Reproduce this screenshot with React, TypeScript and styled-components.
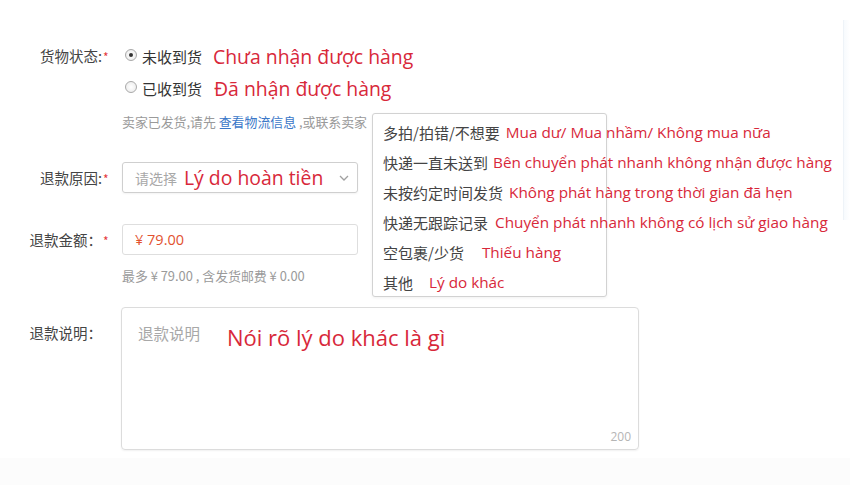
import React from "react";
import styled, { createGlobalStyle } from "styled-components";

const Global = createGlobalStyle`
  html, body { margin: 0; padding: 0; background: #fff; }
  body { font-family: "Noto Sans CJK SC", "Noto Sans", sans-serif; }
`;

const RED = "#d8283a";
const CJK = `"Noto Sans CJK SC", "Noto Sans", sans-serif`;
const VI = `"Open Sans", "Noto Sans", sans-serif`;

const Page = styled.div`
  width: 850px;
  height: 485px;
  display: flex;
  flex-direction: column;
  overflow: hidden;
  background: #fff;
`;

const Main = styled.div`
  flex: 1;
  display: flex;
`;

const Footer = styled.div`
  height: 27px;
  background: #fcfcfc;
`;

const Form = styled.div`
  flex: 1;
  padding-top: 40px;
  display: flex;
  flex-direction: column;
`;

const SideEdge = styled.div`
  width: 6px;
  margin-top: 20px;
  height: 200px;
  border-left: 1px solid #eef3f8;
  background: linear-gradient(to right, #f7fafd, #fff);
`;

const Row = styled.div<{ $mt?: number; $align?: string }>`
  display: grid;
  grid-template-columns: 111px 1fr;
  column-gap: 11px;
  align-items: ${(p) => p.$align || "center"};
  margin-top: ${(p) => p.$mt || 0}px;
`;

const Label = styled.div<{ $pt?: number }>`
  text-align: right;
  font-family: ${CJK};
  font-size: 14.5px;
  color: #444;
  padding-top: ${(p) => p.$pt || 0}px;
  white-space: nowrap;
  align-self: ${(p) => (p.$pt !== undefined ? "start" : "auto")};
`;

const Star = styled.span<{ $hidden?: boolean }>`
  color: ${(p) => (p.$hidden ? "transparent" : "#e4393c")};
  font-size: 12px;
  margin-left: 1px;
  display: inline-block;
  width: 8px;
  text-align: left;
`;

const StatusCol = styled.div`
  display: flex;
  flex-direction: column;
`;

const Option = styled.label`
  display: flex;
  align-items: center;
  height: 32px;
  padding-left: 3px;
`;

const RadioDot = styled.span<{ $checked?: boolean }>`
  width: 10px;
  height: 10px;
  border-radius: 50%;
  border: 1px solid #a9a9a9;
  background: radial-gradient(circle, #fff 0%, #e8e8e8 100%);
  display: inline-flex;
  align-items: center;
  justify-content: center;
  margin-right: 5px;
  margin-top: -2px;
  &::after {
    content: "";
    width: 4px;
    height: 4px;
    border-radius: 50%;
    background: ${(p) => (p.$checked ? "#333" : "transparent")};
  }
`;

const OptionText = styled.span`
  font-family: ${CJK};
  font-size: 15px;
  color: #333;
`;

const Note = styled.span<{ $size: number; $ml?: number }>`
  font-family: ${VI};
  font-size: ${(p) => p.$size}px;
  color: ${RED};
  margin-left: ${(p) => p.$ml || 0}px;
  white-space: nowrap;
`;

const Hint = styled.div<{ $mt?: number }>`
  font-family: ${CJK};
  font-size: 12.9px;
  color: #9a9a9a;
  line-height: 20px;
  margin-top: ${(p) => p.$mt || 0}px;
  white-space: nowrap;
`;

const Link = styled.span`
  color: #3a77c8;
`;

const Field = styled.div`
  position: relative;
  width: 236px;
`;

const SelectBox = styled.div`
  height: 31px;
  box-sizing: border-box;
  border: 1px solid #cfcfcf;
  border-radius: 3px;
  display: flex;
  align-items: center;
  padding: 0 8px 0 12px;
  box-shadow: 0 1px 2px rgba(0, 0, 0, 0.05);
`;

const Placeholder = styled.span<{ $size?: number }>`
  font-family: ${CJK};
  font-size: ${(p) => p.$size || 14}px;
  color: #a8a8a8;
`;

const Chevron = styled.span`
  margin-left: auto;
  display: flex;
  color: #999;
`;

const InputBox = styled.div`
  height: 31px;
  box-sizing: border-box;
  border: 1px solid #dedede;
  border-radius: 3px;
  display: flex;
  align-items: center;
  padding-left: 12px;
`;

const Amount = styled.span`
  font-family: ${VI};
  font-size: 14.5px;
  color: #e2522f;
`;

const Menu = styled.div`
  position: absolute;
  left: 250px;
  top: -49px;
  width: 235px;
  height: 184px;
  box-sizing: border-box;
  background: #fff;
  border: 1px solid #d2d2d2;
  border-radius: 3px;
  padding: 3px 0 0 10px;
  box-shadow: 0 1px 3px rgba(0, 0, 0, 0.06);
  z-index: 2;
`;

const MenuItem = styled.div`
  height: 30px;
  display: flex;
  align-items: center;
  white-space: nowrap;
`;

const MenuCn = styled.span`
  font-family: ${CJK};
  font-size: 15px;
  color: #444;
`;

const TextArea = styled.div`
  width: 518px;
  height: 143px;
  box-sizing: border-box;
  border: 1px solid #dcdcdc;
  border-radius: 4px;
  box-shadow: 0 1px 2px rgba(0, 0, 0, 0.06);
  margin-left: -1px;
  padding: 14px 0 0 16px;
  display: flex;
  flex-direction: column;
`;

const TextLine = styled.div`
  display: flex;
  align-items: flex-start;
`;

const Counter = styled.div`
  margin-top: auto;
  align-self: flex-end;
  padding: 0 7px 4px 0;
  font-family: ${VI};
  font-size: 12px;
  color: #b5b5b5;
`;

const reasons: { cn: string; vi: string; gap: number }[] = [
  { cn: "多拍/拍错/不想要", vi: "Mua dư/ Mua nhầm/ Không mua nữa", gap: 6 },
  { cn: "快递一直未送到", vi: "Bên chuyển phát nhanh không nhận được hàng", gap: 5 },
  { cn: "未按约定时间发货", vi: "Không phát hàng trong thời gian đã hẹn", gap: 6 },
  { cn: "快递无跟踪记录", vi: "Chuyển phát nhanh không có lịch sử giao hàng", gap: 7 },
  { cn: "空包裹/少货", vi: "Thiếu hàng", gap: 18 },
  { cn: "其他", vi: "Lý do khác", gap: 16 },
];

export default function App() {
  return (
    <Page>
      <Global />
      <Main>
        <Form>
          <Row $align="start">
            <Label $pt={5}>
              货物状态:<Star>*</Star>
            </Label>
            <StatusCol>
              <Option>
                <RadioDot $checked />
                <OptionText>未收到货</OptionText>
                <Note $size={19.4} $ml={11}>Chưa nhận được hàng</Note>
              </Option>
              <Option>
                <RadioDot />
                <OptionText>已收到货</OptionText>
                <Note $size={19.4} $ml={12}>Đã nhận được hàng</Note>
              </Option>
              <Hint $mt={8}>
                卖家已发货,请先 <Link>查看物流信息</Link> ,或联系卖家
              </Hint>
            </StatusCol>
          </Row>

          <Row $mt={30}>
            <Label>
              退款原因:<Star>*</Star>
            </Label>
            <Field>
              <SelectBox>
                <Placeholder>请选择</Placeholder>
                <Note $size={19.4} $ml={7}>Lý do hoàn tiền</Note>
                <Chevron>
                  <svg width="10" height="6" viewBox="0 0 10 6">
                    <path d="M1 1 L5 5 L9 1" fill="none" stroke="#a0a0a0" strokeWidth="1.3" />
                  </svg>
                </Chevron>
              </SelectBox>
              <Menu>
                {reasons.map((r) => (
                  <MenuItem key={r.cn}>
                    <MenuCn>{r.cn}</MenuCn>
                    <Note $size={15.3} $ml={r.gap}>{r.vi}</Note>
                  </MenuItem>
                ))}
              </Menu>
            </Field>
          </Row>

          <Row $mt={31}>
            <Label>
              退款金额：<Star>*</Star>
            </Label>
            <Field>
              <InputBox>
                <Amount>¥ 79.00</Amount>
              </InputBox>
            </Field>
          </Row>
          <Row>
            <span />
            <Hint $mt={11}>最多 ¥ 79.00 , 含发货邮费 ¥ 0.00</Hint>
          </Row>

          <Row $mt={21} $align="start">
            <Label $pt={15}>
              退款说明：<Star $hidden>*</Star>
            </Label>
            <TextArea>
              <TextLine>
                <Placeholder $size={15.5}>退款说明</Placeholder>
                <Note $size={22} $ml={27}>Nói rõ lý do khác là gì</Note>
              </TextLine>
              <Counter>200</Counter>
            </TextArea>
          </Row>
        </Form>
        <SideEdge />
      </Main>
      <Footer />
    </Page>
  );
}
